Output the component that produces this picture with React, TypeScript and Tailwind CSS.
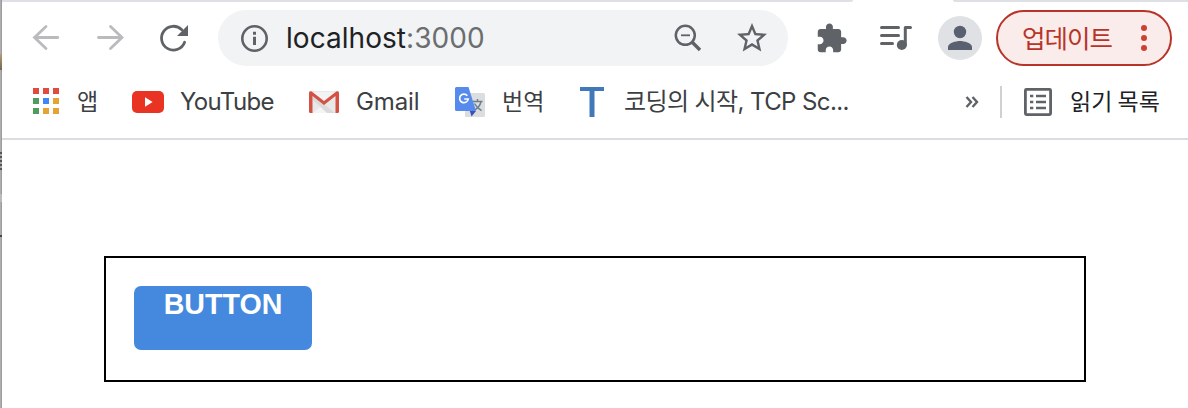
const latin = "font-['Inter','Noto_Sans_CJK_KR',sans-serif]";
const korean = "font-['Noto_Sans_CJK_KR',sans-serif]";

function TabStrip() {
  return (
    <div className="flex h-[2px] shrink-0">
      <div className="w-[851px] rounded-br-[4px] bg-[#dfe0e5]" />
      <div className="w-[100px]" />
      <div className="flex-1 rounded-bl-[4px] bg-[#dfe0e5]" />
    </div>
  );
}

function AddressBar() {
  return (
    <div className="ml-[26px] flex h-14 w-[570px] items-center rounded-full bg-[#f1f3f4]">
      <svg className="ml-[20px] shrink-0" width="32" height="32" viewBox="0 0 32 32" fill="none" stroke="#5f6368">
        <circle cx="16.5" cy="16.5" r="12.2" strokeWidth="2.6" />
        <path d="M16.5 9.8v2.9M16.5 14.8v8.2" strokeWidth="3" />
      </svg>
      <div className={`ml-4 w-[380px] whitespace-nowrap text-[28px] leading-8 tracking-[0.05px] text-[#202124] ${latin}`}>
        localhost<span className="text-[#6b6e70]">:3000</span>
      </div>
      <svg className="ml-[4px] shrink-0" width="36" height="36" viewBox="0 0 36 36" fill="none" stroke="#5f6368">
        <circle cx="15.3" cy="15.3" r="9.5" strokeWidth="2.5" />
        <path d="M11 15.3h9" strokeWidth="1.8" />
        <path d="M21.5 21.5l8.5 8.5" strokeWidth="3.4" />
      </svg>
      <svg className="ml-[28px] shrink-0" width="36" height="36" viewBox="0 0 24 24" fill="#5f6368">
        <path d="M22 9.24l-7.19-.62L12 2 9.19 8.63 2 9.24l5.46 4.73L5.82 21 12 17.27 18.18 21l-1.63-7.03L22 9.24zM12 15.4l-3.76 2.27 1-4.28-3.32-2.88 4.38-.38L12 6.1l1.71 4.04 4.38.38-3.32 2.88 1 4.28L12 15.4z" />
      </svg>
    </div>
  );
}

function Toolbar() {
  return (
    <div className="flex h-[72px] shrink-0 items-center pl-7">
      <svg className="shrink-0" width="32" height="32" viewBox="0 0 32 32" fill="none" stroke="#babbbd" strokeWidth="2.8" strokeLinecap="round">
        <path d="M4.5 15.5h23.3M16 4.5l-11.500 11 11.500 11" />
      </svg>
      <svg className="ml-8 shrink-0" width="32" height="32" viewBox="0 0 32 32" fill="none" stroke="#babbbd" strokeWidth="2.8" strokeLinecap="round">
        <path d="M4.500 15.500h23M16.500 4.500l11.500 11-11.500 11" />
      </svg>
      <svg className="ml-8 shrink-0" width="34" height="32" viewBox="0 0 34 32">
        <path d="M26.6 20.2A11.9 11.9 0 1 1 23.8 7.7" fill="none" stroke="#5f6368" strokeWidth="2.8" strokeLinecap="round" />
        <path d="M30 3v11H19z" fill="#5f6368" />
      </svg>
      <AddressBar />
      <svg className="ml-[27px] shrink-0" width="33" height="33" viewBox="0 0 24 24" fill="#5f6368">
        <path d="M20.5 11H19V7c0-1.1-.9-2-2-2h-4V3.5C13 2.12 11.88 1 10.5 1S8 2.12 8 3.5V5H4c-1.1 0-1.99.9-1.99 2v3.8H3.5c1.49 0 2.7 1.21 2.7 2.7s-1.21 2.7-2.7 2.7H2V20c0 1.1.9 2 2 2h3.8v-1.5c0-1.49 1.21-2.7 2.7-2.7 1.49 0 2.7 1.21 2.7 2.7V22H17c1.1 0 2-.9 2-2v-4h1.5c1.38 0 2.5-1.12 2.5-2.5S21.88 11 20.5 11z" />
      </svg>
      <svg className="ml-[30px] shrink-0" width="36" height="32" viewBox="0 0 36 32" fill="none" stroke="#5f6368" strokeWidth="3" strokeLinecap="round">
        <path d="M3.5 5.5h17M3.5 13.5h17M3.5 21.5h11" />
        <circle cx="23.8" cy="23" r="5" fill="#5f6368" stroke="none" />
        <path d="M27.3 23V5.5h5.2" strokeLinejoin="round" />
      </svg>
      <svg className="ml-[24px] shrink-0" width="44" height="44" viewBox="0 0 44 44">
        <circle cx="22" cy="22" r="22" fill="#dfe1e5" />
        <circle cx="22" cy="16" r="6.2" fill="#596070" />
        <path d="M10 34v-3c0-4 8-6 12-6s12 2 12 6v3z" fill="#596070" />
      </svg>
      <div className="ml-[14px] flex h-14 w-44 shrink-0 items-center rounded-full border-2 border-[#b93428] bg-[#faeceb]">
        <div className={`mb-[3px] ml-[24px] w-[91px] whitespace-nowrap text-[25.5px] leading-8 tracking-[-1px] text-[#b93428] ${korean}`}>업데이트</div>
        <div className="ml-[28px] flex flex-col gap-1">
          <div className="size-1.5 rounded-full bg-[#cc4132]" />
          <div className="size-1.5 rounded-full bg-[#cc4132]" />
          <div className="size-1.5 rounded-full bg-[#cc4132]" />
        </div>
      </div>
    </div>
  );
}

function Bookmarks() {
  const label = "shrink-0 whitespace-nowrap leading-8 text-[#3c4043]";
  return (
    <div className="flex h-[64px] shrink-0 items-center pb-[8px] pl-[31px]">
      <div className="-mt-0.5 grid shrink-0 grid-cols-3 gap-1">
        <div className="size-1.5 bg-[#e04a3f]" />
        <div className="size-1.5 bg-[#e04a3f]" />
        <div className="size-1.5 bg-[#e04a3f]" />
        <div className="size-1.5 bg-[#4f9c5c]" />
        <div className="size-1.5 bg-[#4285f4]" />
        <div className="size-1.5 bg-[#e5a333]" />
        <div className="size-1.5 bg-[#4f9c5c]" />
        <div className="size-1.5 bg-[#e5a333]" />
        <div className="size-1.5 bg-[#e5a333]" />
      </div>
      <div className={`mb-1 ml-[18px] w-[55px] text-[23px] ${label} ${korean}`}>앱</div>
      <svg className="shrink-0" width="32" height="22" viewBox="0 0 32 22">
        <rect width="32" height="22" rx="5" fill="#e93323" />
        <path d="M13 6.3v9.4l7.7-4.7z" fill="#fff" />
      </svg>
      <div className={`ml-4 w-[129px] text-[24px] tracking-[-0.65px] ${label} ${latin}`}>YouTube</div>
      <svg className="shrink-0" width="30" height="22" viewBox="0 0 30 22">
        <rect width="30" height="22" rx="1.5" fill="#e8e8e8" />
        <path d="M4 22l11-9 11 9z" fill="#f4f4f4" />
        <path d="M4 4l22 18h-8L4 9z" fill="#dadada" />
        <path d="M2 1h26L15 11z" fill="#f3f3f3" />
        <path d="M0 2C0 .4 1.7-.2 3 .8L15 10 27 .8c1.3-1 3-.4 3 1.2V20.5A1.5 1.5 0 0 1 28.5 22H26.5V5L15 14 3.5 5v17h-2A1.5 1.5 0 0 1 0 20.5z" fill="#d35244" />
      </svg>
      <div className={`ml-[17px] w-[99px] text-[24px] tracking-[-0.1px] ${label} ${latin}`}>Gmail</div>
      <svg className="shrink-0" width="30" height="30" viewBox="0 0 30 30">
        <rect x="10" y="6" width="20" height="24" rx="1.5" fill="#dcdddf" />
        <path d="M17.5 14.5h10M22.5 12v2.500M26 14.5c-.8 4-3.5 7-7 9M19.5 16.5c1.5 3 4 5.5 7 7" fill="none" stroke="#66808e" strokeWidth="1.4" />
        <path d="M14.8 24h6.2l-4.500 5.5z" fill="#3b51b5" />
        <path d="M1.5 0h12L21 24H1.5A1.5 1.5 0 0 1 0 22.5v-21A1.5 1.5 0 0 1 1.5 0z" fill="#568bed" />
        <path d="M12.3 8.7A4.3 4.3 0 1 0 13.2 12H9.2" fill="none" stroke="#fff" strokeWidth="1.7" />
      </svg>
      <div className={`mb-1 ml-[17px] w-[78px] text-[23px] ${label} ${korean}`}>번역</div>
      <svg className="shrink-0" width="24" height="30" viewBox="0 0 24 30" stroke="#4078b9" fill="none">
        <path d="M0 2h24" strokeWidth="4" />
        <path d="M12 2v28" strokeWidth="5" />
      </svg>
      <div className={`ml-[20px] w-[341px] text-[24px] tracking-[-0.6px] ${label} ${latin}`}>코딩의 시작, TCP Sc...</div>
      <svg className="shrink-0" width="14" height="14" viewBox="0 0 14 14" fill="none" stroke="#5f6368" strokeWidth="2.4">
        <path d="M1.5 2l4.5 5-4.5 5M7.5 2l4.5 5-4.5 5" />
      </svg>
      <div className="ml-[21px] h-8 w-0.5 shrink-0 bg-[#cfd0d2]" />
      <svg className="ml-[22px] shrink-0" width="28" height="28" viewBox="0 0 28 28" fill="none" stroke="#5f6368">
        <rect x="1.4" y="1.4" width="25.2" height="25.2" rx="1" strokeWidth="2.8" />
        <path d="M6 8h3.3M12 8h10M6 14h3.3M12 14h10M6 20h3.3M12 20h10" strokeWidth="2.4" />
      </svg>
      <div className={`mb-1 ml-[18px] shrink-0 whitespace-nowrap text-[23px] leading-8 text-[#202124] ${korean}`}>읽기 목록</div>
    </div>
  );
}

export default function App() {
  return (
    <div className="flex h-[408px] w-[1188px] overflow-hidden bg-white">
      <div className="flex w-[2px] shrink-0 flex-col bg-gradient-to-r from-[#b8b8b8] to-[#929292]">
        <div className="mt-[54px] h-4 bg-gradient-to-b from-[#b09c78] to-[#756750]" />
        <div className="mt-[82px] h-[18px] bg-[repeating-linear-gradient(#55565c_0_2px,#aaaaaa_2px_4px)]" />
        <div className="mt-6 h-[8px] bg-[#bababa]" />
        <div className="mt-[33px] h-0.5 bg-[#454545]" />
      </div>
      <div className="flex flex-1 flex-col">
        <TabStrip />
        <Toolbar />
        <Bookmarks />
        <div className="h-0.5 shrink-0 bg-[#dadce0]" />
        <main className="pl-[102px] pt-[116px]">
          <div className="h-[126px] w-[982px] border-2 border-black p-7">
            <button className="flex h-16 w-[178px] items-start justify-center rounded-[7px] bg-[#4489de] pt-[2px] font-['Liberation_Sans',sans-serif] text-[28.6px] font-bold leading-8 text-white">
              BUTTON
            </button>
          </div>
        </main>
      </div>
    </div>
  );
}
